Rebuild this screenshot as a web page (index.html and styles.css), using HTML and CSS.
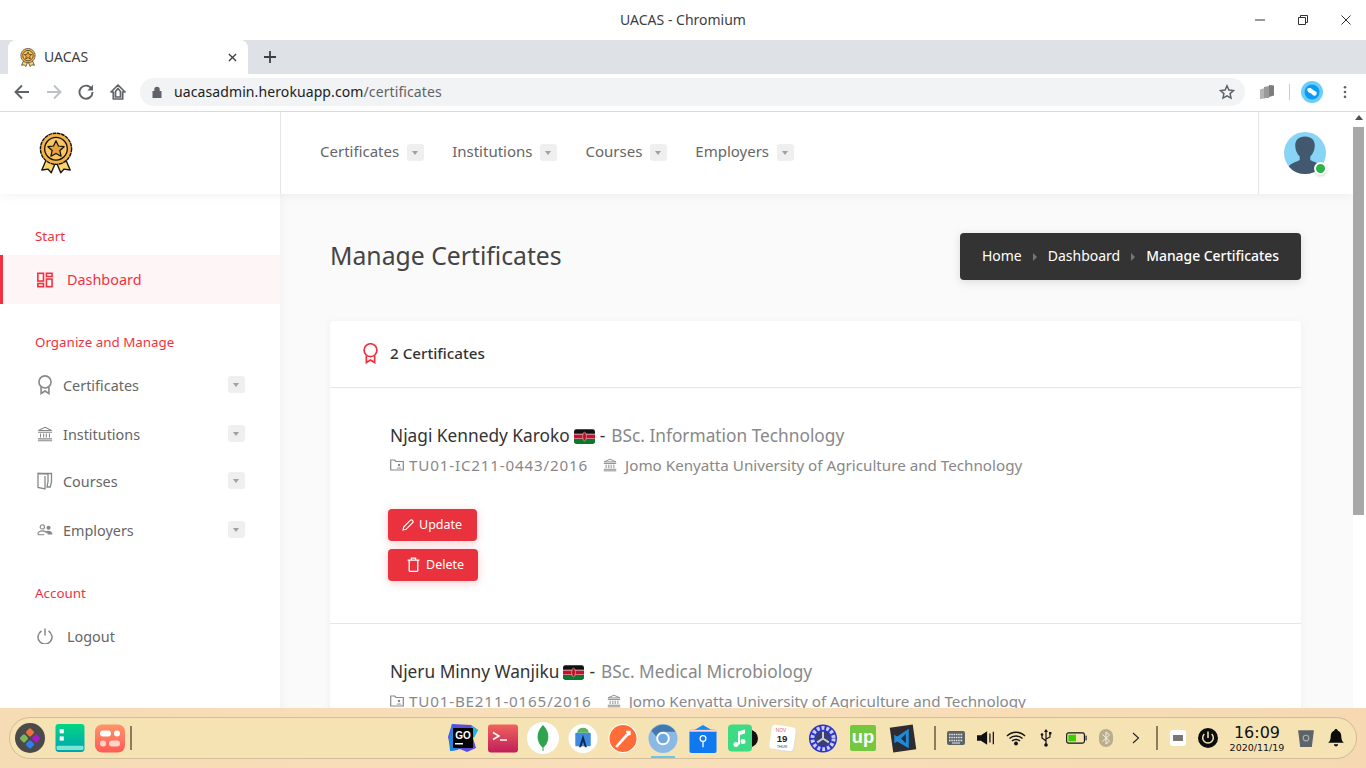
FILE: index.html
```html
<!DOCTYPE html>
<html lang="en">
<head>
<meta charset="utf-8">
<title>UACAS - Chromium</title>
<link rel="stylesheet" href="styles.css">
</head>
<body>
<svg class="sprite" width="0" height="0">
  <defs>
    <symbol id="ribbon" viewBox="0 0 18 22"><g fill="none" stroke="currentColor" stroke-width="1.800"><circle cx="9" cy="7.500" r="6.800"/><path d="M4.600 13V20.600L9 17.800l4.400 2.800V13"/></g></symbol>
    <symbol id="bank" viewBox="0 0 18 18"><g fill="none" stroke="currentColor" stroke-width="1.200"><path d="M9 1.500 16.500 5H1.500Z"/><path d="M1 7h16M1 16.500h16M1 14.500h16M4 8.500v4.500M7.500 8.500v4.500M10.500 8.500v4.500M14 8.500v4.500"/></g></symbol>
    <symbol id="medal" viewBox="0 0 36 44">
      <path d="M9 26 3 40l6.500-1 3.500 4 5-12 5 12 3.500-4 6.500 1-6-14Z" fill="#fbd46d" stroke="#111" stroke-width="1.400" stroke-linejoin="round"/>
      <circle cx="18" cy="17.500" r="16.500" fill="#f4b24a" stroke="#111" stroke-width="1.500" stroke-dasharray="4 .6"/>
      <circle cx="18" cy="17.500" r="12" fill="#f9c65f" stroke="#111" stroke-width="1.400"/>
      <path d="m18 9 2.600 5.600 6 .7-4.500 4.100 1.300 6L18 22.500l-5.400 2.900 1.300-6-4.500-4.100 6-.7Z" fill="#e9a23b" stroke="#111" stroke-width="1.300" stroke-linejoin="round"/>
    </symbol>
    <symbol id="flag" viewBox="0 0 22 15">
      <rect width="22" height="15" rx="2.500" fill="#111"/>
      <path d="M0 5h22v5H0Z" fill="#c8102e"/><path d="M0 4.500h22v.8H0ZM0 9.700h22v.8H0Z" fill="#eee"/>
      <path d="M0 10.500h22V12.500a2.500 2.500 0 0 1-2.500 2.500h-17A2.500 2.500 0 0 1 0 12.500Z" fill="#0a7a2f"/>
      <ellipse cx="11" cy="7.500" rx="2" ry="4.500" fill="#b5121b" stroke="#eee" stroke-width=".5"/>
    </symbol>
  </defs>
</svg>
<div class="screen">
  <header class="titlebar">
    <span class="titlebar-text">UACAS - Chromium</span>
    <div class="winbtns">
      <svg class="winbtn" viewBox="0 0 12 12"><path d="M1 6h10" stroke="#333" fill="none"/></svg>
      <svg class="winbtn" viewBox="0 0 12 12"><path d="M1.500 3.500h7v7h-7ZM3.500 3.500v-2h7v7h-2" stroke="#333" fill="none"/></svg>
      <svg class="winbtn" viewBox="0 0 12 12"><path d="m1.500 1.500 9 9M10.500 1.500l-9 9" stroke="#333" fill="none"/></svg>
    </div>
  </header>
  <div class="tabstrip">
    <div class="tab">
      <svg class="favicon"><use href="#medal"/></svg>
      <span class="tab-title">UACAS</span>
      <svg class="tab-close" viewBox="0 0 10 10"><path d="m1 1 8 8M9 1 1 9" stroke="#3c4043" stroke-width="1.500"/></svg>
    </div>
    <svg class="newtab" viewBox="0 0 12 12"><path d="M6 0v12M0 6h12" stroke="#3c4043" stroke-width="1.800"/></svg>
  </div>
  <div class="toolbar">
    <svg class="tool" viewBox="0 0 16 16"><path d="M15 8H2M8 1.500 1.500 8 8 14.500" fill="none" stroke="#5f6368" stroke-width="1.900"/></svg>
    <svg class="tool" viewBox="0 0 16 16"><path d="M1 8h13M8 1.500 14.500 8 8 14.500" fill="none" stroke="#bdc1c6" stroke-width="1.900"/></svg>
    <svg class="tool" viewBox="0 0 16 16"><path d="M13.500 4.700A6.500 6.500 0 1 0 14.500 8" fill="none" stroke="#5f6368" stroke-width="1.900"/><path d="M15 .8V6.500H9.300Z" fill="#5f6368"/></svg>
    <svg class="tool" viewBox="0 0 16 16"><path d="M8 1 1 8h2.300v7h9.400V8H15ZM5.500 13V7.500L8 4.500l2.500 3V13Z" fill="none" stroke="#5f6368" stroke-width="1.700" stroke-linejoin="round"/></svg>
    <div class="omnibox">
      <svg class="lock" viewBox="0 0 10 12"><path d="M2.300 5V3.500a2.700 2.700 0 0 1 5.400 0V5H9.500v7H.5V5Z" fill="#5f6368"/></svg>
      <span class="url">uacasadmin.herokuapp.com<span class="url-path">/certificates</span></span>
      <svg class="star" viewBox="0 0 16 16"><path d="m8 1.800 1.900 4.200 4.600.5-3.400 3.100.9 4.500L8 11.800l-4 2.300.9-4.500L1.500 6.500l4.600-.5Z" fill="none" stroke="#5f6368" stroke-width="1.500"/></svg>
    </div>
    <div class="ext-group">
      <svg class="ext" viewBox="0 0 16 16"><path d="M1 5.500 6 4v10.500L1 15Z" fill="#b5b5b5"/><path d="M5 3 10 2v12H5Z" fill="#9a9a9a"/><path d="M10 1l5 .5v10l-5 1.500Z" fill="#7d7d7d"/></svg>
      <span class="ext-sep"></span>
      <svg class="ext-blue" viewBox="0 0 22 22"><circle cx="11" cy="11" r="11" fill="#6ccdf8"/><circle cx="11" cy="11" r="7.500" fill="#0a9cf5"/><path d="M6.500 7.500c2-1 4-.5 5 1l4 2.500c.5 1.500 0 3-1 3.500-1.500.5-3 0-3.500-1.500l-3-1.500c-1.500-.8-2-2.500-1.500-4Z" fill="#fff"/></svg>
      <svg class="kebab" viewBox="0 0 4 16"><circle cx="2" cy="2.500" r="1.500" fill="#5f6368"/><circle cx="2" cy="8" r="1.500" fill="#5f6368"/><circle cx="2" cy="13.500" r="1.500" fill="#5f6368"/></svg>
    </div>
  </div>
  <div class="viewport">
    <div class="page">
      <div class="topbar">
        <div class="brand"><svg class="logo"><use href="#medal"/></svg></div>
        <nav class="topnav">
          <a class="topnav-item"><span class="topnav-text">Certificates</span><span class="caret"></span></a>
          <a class="topnav-item"><span class="topnav-text">Institutions</span><span class="caret"></span></a>
          <a class="topnav-item"><span class="topnav-text">Courses</span><span class="caret"></span></a>
          <a class="topnav-item"><span class="topnav-text">Employers</span><span class="caret"></span></a>
        </nav>
        <div class="usercell">
          <div class="avatar">
            <svg class="avatar-img" viewBox="0 0 42 42"><circle cx="21" cy="21" r="21" fill="#87d4f7"/><path d="M21 4.500c6.300 0 9.800 3.800 9.800 9 0 4-1.700 8.500-4.500 11v3.500c3.500 2 8.700 3.200 11 6.500A21 21 0 0 1 21 42 21 21 0 0 1 4.700 34.500c2.300-3.300 7.500-4.500 11-6.500v-3.500c-2.800-2.500-4.500-7-4.500-11 0-5.200 3.500-9 9.800-9Z" fill="#42586e"/></svg>
            <span class="status"></span>
          </div>
        </div>
      </div>
      <div class="body-row">
        <aside class="sidebar">
          <div class="side-label first">Start</div>
          <a class="side-link active">
            <svg class="side-ico dash" viewBox="0 0 17 16"><g fill="none" stroke="currentColor" stroke-width="1.700"><rect x=".9" y=".9" width="6" height="8.200"/><rect x="10" y=".9" width="6" height="3.400"/><rect x="10" y="7" width="6" height="8.100"/><rect x=".9" y="11.700" width="6" height="3.400"/></g></svg>
            Dashboard
          </a>
          <div class="side-label">Organize and Manage</div>
          <a class="side-link sub r1"><svg class="side-ico"><use href="#ribbon"/></svg><span class="grow">Certificates</span><span class="caret"></span></a>
          <a class="side-link sub r2"><svg class="side-ico"><use href="#bank"/></svg><span class="grow">Institutions</span><span class="caret"></span></a>
          <a class="side-link sub r3"><svg class="side-ico" viewBox="0 0 16 18"><path d="M1 1.500h13.500V10l-1.300 5H10l1-5.500V2L1 1.500v14l7 1.500V4" fill="none" stroke="currentColor" stroke-width="1.300"/></svg><span class="grow">Courses</span><span class="caret"></span></a>
          <a class="side-link sub r4"><svg class="side-ico" viewBox="0 0 18 14"><circle cx="6" cy="3.500" r="2.400" fill="none" stroke="currentColor" stroke-width="1.300"/><circle cx="13" cy="4.500" r="2.300" fill="currentColor"/><path d="M1 12c0-2.500 2.500-4 5-4s4.500 1 5 2.500M1 12.300h7" fill="none" stroke="currentColor" stroke-width="1.300"/><path d="M9.500 8.500c3-1.300 7.500-.5 8 3.500H12c0-1.500-1-2.800-2.500-3.500Z" fill="currentColor"/></svg><span class="grow">Employers</span><span class="caret"></span></a>
          <div class="side-label account">Account</div>
          <a class="side-link logout">
            <svg class="side-ico dash" viewBox="0 0 16 16"><path d="M4.500 3a7 7 0 1 0 7 0M8 .5v7" fill="none" stroke="currentColor" stroke-width="1.500"/></svg>
            Logout
          </a>
        </aside>
        <main class="main">
          <div class="page-head">
            <h1 class="page-title">Manage Certificates</h1>
            <div class="crumbs">
              <span>Home</span><span class="crumb-sep"></span><span>Dashboard</span><span class="crumb-sep"></span><span class="crumb-now">Manage Certificates</span>
            </div>
          </div>
          <section class="card">
            <div class="card-head">
              <svg class="card-ico"><use href="#ribbon"/></svg>
              <span>2 Certificates</span>
            </div>
            <article class="cert">
              <h3 class="cert-title"><span class="cert-name">Njagi Kennedy Karoko</span><svg class="flag"><use href="#flag"/></svg><span class="cert-name">-</span><span class="cert-course">BSc. Information Technology</span></h3>
              <div class="cert-meta">
                <svg class="meta-ico" viewBox="0 0 14 12"><path d="M.7 1h4l1.300 1.500h7.300V11H.7Z" fill="none" stroke="currentColor" stroke-width="1.200"/><circle cx="9" cy="6" r="1.200" fill="currentColor"/><path d="M6.500 9.500c0-1.500 5-1.500 5 0Z" fill="currentColor"/></svg>
                <span class="cert-code">TU01-IC211-0443/2016</span>
                <svg class="meta-ico bank-gap"><use href="#bank"/></svg>
                <span class="inst">Jomo Kenyatta University of Agriculture and Technology</span>
              </div>
              <div class="actions">
                <a class="btn btn-up"><svg class="btn-ico" viewBox="0 0 12 12"><path d="M1 11l.7-3L8.500 1.200a1.200 1.200 0 0 1 1.700 0l.6.600a1.200 1.200 0 0 1 0 1.700L4 10.300Z" fill="none" stroke="#fff" stroke-width="1.100"/></svg>Update</a>
                <a class="btn btn-del"><svg class="btn-ico trash" viewBox="0 0 12 14"><path d="M.5 3h11M2 3v9.500a1 1 0 0 0 1 1h6a1 1 0 0 0 1-1V3M4 3V1h4v2" fill="none" stroke="#fff" stroke-width="1.200"/></svg>Delete</a>
              </div>
            </article>
            <article class="cert">
              <h3 class="cert-title"><span class="cert-name">Njeru Minny Wanjiku</span><svg class="flag"><use href="#flag"/></svg><span class="cert-name">-</span><span class="cert-course">BSc. Medical Microbiology</span></h3>
              <div class="cert-meta">
                <svg class="meta-ico" viewBox="0 0 14 12"><path d="M.7 1h4l1.300 1.500h7.300V11H.7Z" fill="none" stroke="currentColor" stroke-width="1.200"/><circle cx="9" cy="6" r="1.200" fill="currentColor"/><path d="M6.500 9.500c0-1.500 5-1.500 5 0Z" fill="currentColor"/></svg>
                <span class="cert-code">TU01-BE211-0165/2016</span>
                <svg class="meta-ico bank-gap"><use href="#bank"/></svg>
                <span class="inst">Jomo Kenyatta University of Agriculture and Technology</span>
              </div>
            </article>
          </section>
        </main>
      </div>
    </div>
    <div class="scrollbar">
      <span class="sb-up"></span>
      <span class="sb-thumb"></span>
      <span class="sb-down"></span>
    </div>
  </div>
  <footer class="dockwrap">
    <div class="dock">
      <div class="dock-left">
        <span class="slot"><svg class="d36" viewBox="0 0 30 30"><circle cx="15" cy="15" r="15" fill="#4a4a4a"/><rect x="12" y="6" width="6.500" height="6.500" rx="1.500" transform="rotate(45 15 9)" fill="#f0703a"/><rect x="6" y="12" width="6.500" height="6.500" rx="1.500" transform="rotate(45 9 15)" fill="#7ab85a"/><rect x="18" y="12" width="6.500" height="6.500" rx="1.500" transform="rotate(45 21 15)" fill="#a81dc8"/><rect x="12" y="18" width="6.500" height="6.500" rx="1.500" transform="rotate(45 15 21)" fill="#2f7ff0"/></svg></span>
        <span class="slot"><svg class="d30" viewBox="0 0 28 28"><defs><linearGradient id="g1" x1="0" y1="0" x2="0" y2="1"><stop offset="0" stop-color="#00d681"/><stop offset="1" stop-color="#00a3b5"/></linearGradient></defs><rect width="28" height="27" rx="3" fill="url(#g1)"/><rect x="1" y="21" width="26" height="4" rx="1" fill="#7fe5d3"/><rect x="4" y="5" width="4" height="4" fill="#fff"/><rect x="4" y="12" width="4" height="4" fill="#fff"/></svg></span>
        <span class="slot"><svg class="d30" viewBox="0 0 30 28"><defs><linearGradient id="g2" x1="0" y1="0" x2="0" y2="1"><stop offset="0" stop-color="#ff9568"/><stop offset="1" stop-color="#ff5b58"/></linearGradient></defs><rect width="30" height="28" rx="7" fill="url(#g2)"/><rect x="5" y="6" width="11" height="6" rx="3" fill="#fff"/><circle cx="22" cy="9" r="3" fill="#fff"/><circle cx="8" cy="19" r="3" fill="#ffd6c8"/><rect x="14" y="16" width="11" height="6" rx="3" fill="#ffd6c8"/></svg></span>
        <span class="dock-sep"></span>
      </div>
      <div class="dock-center">
        <span class="slot"><svg class="d32" viewBox="0 0 32 32"><path d="M5 2 24 3l7 5-5 8 3 10-9 4-7-3-9 2-3-14Z" fill="#5b4ce0"/><path d="M24 3l7 5-4 8Z" fill="#17b8e8"/><path d="M2 17 5 2l6 26-8 1Z" fill="#2384e0"/><rect x="6" y="6" width="20" height="20" fill="#000"/><text x="16" y="17" class="go">GO</text><rect x="8" y="21" width="8" height="1.500" fill="#fff"/></svg></span>
        <span class="slot"><svg class="d30" viewBox="0 0 30 28"><defs><linearGradient id="g3" x1="0" y1="0" x2="0" y2="1"><stop offset="0" stop-color="#f0635a"/><stop offset="1" stop-color="#c01f5a"/></linearGradient></defs><rect width="30" height="28" rx="3" fill="url(#g3)"/><path d="M5 8l6 3.500L5 15" stroke="#fff" stroke-width="1.500" fill="none"/><path d="M12 15.500h7" stroke="#fff" stroke-width="1.500"/></svg></span>
        <span class="slot"><svg class="d32" viewBox="0 0 32 32"><circle cx="16" cy="16" r="16" fill="#fff"/><path d="M16 3c5 5 6 10 5 15-1 4-3 6-4.500 7.500V29h-1v-3.500C14 24 12 22 11 18c-1-5 0-10 5-15Z" fill="#2ea44f"/></svg></span>
        <span class="slot"><svg class="d30" viewBox="0 0 30 30"><circle cx="15" cy="15" r="15" fill="#fff"/><rect x="7" y="9" width="16" height="14" rx="1" fill="#3f8ae0"/><path d="M9 9a6 5 0 0 1 12 0Z" fill="#60b060"/><path d="M15 11l-4 13h2l2-6 2 6h2Z" fill="#102a50"/></svg></span>
        <span class="slot"><svg class="d30" viewBox="0 0 30 30"><circle cx="15" cy="15" r="15" fill="#fff"/><circle cx="15" cy="15" r="14" fill="#ff6c37"/><path d="M7 23 18 10l2.500 2L9 24.500Z M18 7h5v4.500l-3.500 1Z" fill="#fff"/></svg></span>
        <span class="slot"><svg class="d30" viewBox="0 0 30 30"><circle cx="15" cy="15" r="15" fill="#8ab9e6"/><path d="M3 7A15 15 0 0 1 28 8H15a7 7 0 0 0-7 5Z" fill="#4278ad"/><circle cx="15" cy="15" r="7" fill="#fff"/><circle cx="15" cy="15" r="5" fill="#70a7de"/></svg><span class="running"></span></span>
        <span class="slot"><svg class="d30" viewBox="0 0 28 30"><path d="M2 8 14 1l12 7Z" fill="#158cf0"/><rect y="6" width="28" height="24" rx="2" fill="#0f7af0"/><rect y="6" width="28" height="2" fill="#ffd0d0"/><circle cx="14" cy="15" r="3" fill="none" stroke="#fff" stroke-width="1.300"/><path d="M14 18v6" stroke="#fff" stroke-width="1.300"/></svg></span>
        <span class="slot"><svg class="d30" viewBox="0 0 30 28"><circle cx="21" cy="14" r="9" fill="#111"/><rect width="24" height="27" rx="4" fill="#3ddc84"/><path d="M10 20V7l7-2v4l-5 1.500V20" fill="#fff"/><circle cx="8" cy="20" r="2.500" fill="#fff"/><circle cx="15" cy="17" r="2.500" fill="#fff"/></svg></span>
        <span class="slot"><svg class="d30" viewBox="0 0 30 30"><rect x="3" y="3" width="25" height="25" rx="4" fill="#dcdcdc" transform="rotate(8 15 15)"/><rect x="2" y="2" width="25" height="25" rx="4" fill="#fff" transform="rotate(8 15 15)"/><text x="13" y="8" class="cal-a">NOV</text><text x="14" y="19" class="cal-b">19</text><text x="14" y="25" class="cal-c">THUR</text></svg></span>
        <span class="slot"><svg class="d30" viewBox="0 0 30 30"><circle cx="15" cy="15" r="14.500" fill="#2f34c8"/><circle cx="15" cy="15" r="11" fill="none" stroke="#c8d0f0" stroke-width="4" stroke-dasharray="3 2"/><circle cx="15" cy="15" r="7.500" fill="#3a3f70"/><path d="M15 15V8M15 15l6 4M15 15l-6 4" stroke="#d0d0d8" stroke-width="2"/></svg></span>
        <span class="slot"><svg class="d28" viewBox="0 0 28 28"><rect width="27" height="27" rx="2" fill="#74c83f"/><text x="13.500" y="19" class="up">up</text></svg></span>
        <span class="slot"><svg class="d30" viewBox="0 0 30 30"><rect x="3" y="2" width="24" height="26" fill="#2c2c32" transform="rotate(-8 15 15)"/><path d="M21 5v20l-12-7-3 2V11l3 2Zm-3 5-5 5 5 5Z" fill="#1f8ad8"/></svg></span>
      </div>
      <div class="dock-right">
        <span class="dock-sep"></span>
        <span class="tray"><svg class="t18" viewBox="0 0 18 14"><rect width="18" height="14" rx="2" fill="#5d6468"/><path d="M2 3.500h14M2 6.500h14M2 9.500h14" stroke="#e8e8e8" stroke-width="1.300" stroke-dasharray="1.500 .8"/><path d="M5 12h8" stroke="#e8e8e8"/></svg></span>
        <span class="tray"><svg class="t18" viewBox="0 0 16 14"><path d="M0 4.500h3.500L9 1v12L3.500 9.500H0Z" fill="#111"/><path d="M11.500 3v8M14.500 1.500v11" stroke="#111" stroke-width="1.100"/></svg></span>
        <span class="tray"><svg class="t20" viewBox="0 0 20 15"><g fill="none" stroke="#111" stroke-width="1.400"><path d="M1 5.500c5-5 13-5 18 0M3.500 8c3.500-3.300 9.500-3.300 13 0M6 10.500c2-2 6-2 8 0"/></g><circle cx="10" cy="13" r="1.900" fill="#111"/></svg></span>
        <span class="tray"><svg class="t18" viewBox="0 0 12 18"><path d="M6 1v15M2 6v3l4 3M10 4.500V8L6 10" fill="none" stroke="#111" stroke-width="1.200"/><path d="m6 0 2 3H4Z" fill="#111"/><circle cx="6" cy="16" r="1.800" fill="#111"/><circle cx="2" cy="5.500" r="1.300" fill="#111"/><rect x="9" y="3" width="2.400" height="2.400" fill="#111"/></svg></span>
        <span class="tray"><svg class="t22" viewBox="0 0 22 12"><rect x=".7" y=".7" width="18.600" height="10.600" rx="2" fill="none" stroke="#111" stroke-width="1.200"/><rect x="2.500" y="2.500" width="8" height="7" fill="#38d000"/><rect x="20.300" y="3.500" width="1.500" height="5" fill="#444"/></svg></span>
        <span class="tray"><svg class="t18" viewBox="0 0 14 18"><rect width="14" height="18" rx="7" fill="#b9ad8e"/><path d="M3.500 5.500l7 6.500L7 15V3l3.500 3-7 6.500" fill="none" stroke="#f5f0e0" stroke-width="1"/></svg></span>
        <span class="tray"><svg class="t12" viewBox="0 0 8 12"><path d="m1 1 5.500 5L1 11" fill="none" stroke="#222" stroke-width="1.100"/></svg></span>
        <span class="dock-sep sep2"></span>
        <span class="tray"><svg class="t16" viewBox="0 0 16 16"><rect width="16" height="16" rx="3" fill="#fff"/><rect x="3" y="5" width="10" height="6" fill="#777"/></svg></span>
        <span class="tray"><svg class="t20" viewBox="0 0 20 20"><circle cx="10" cy="10" r="10" fill="#0c0c0c"/><path d="M6.300 6a5.300 5.300 0 1 0 7.400 0M10 3.500v6.500" fill="none" stroke="#f5e3b5" stroke-width="1.500"/></svg></span>
        <span class="clock"><span class="clock-time">16:09</span><span class="clock-date">2020/11/19</span></span>
        <span class="tray"><svg class="t18" viewBox="0 0 16 16"><path d="M1 1h14l-1.800 15H2.800Z" fill="#5d6468"/><circle cx="8" cy="8" r="2.500" fill="none" stroke="#a9b0b3"/></svg></span>
        <span class="tray"><svg class="t18" viewBox="0 0 16 17"><path d="M8 0c1 0 1.500.6 1.500 1.400C12 2.200 13 4.500 13 7c0 3 .8 4.500 2.500 6H.5C2.200 11.500 3 10 3 7c0-2.500 1-4.800 3.500-5.600C6.500.6 7 0 8 0Z" fill="#0c0c0c"/><path d="M6 14.500h4a2 2 0 0 1-4 0Z" fill="#0c0c0c"/></svg></span>
      </div>
    </div>
  </footer>
</div>
</body>
</html>
```
FILE: styles.css
```css
* { box-sizing: border-box; }
html, body { margin: 0; padding: 0; height: 100%; }
body { overflow: hidden; background: #fff; font-family: "Noto Sans", "Open Sans", sans-serif; }
.sprite { display: block; height: 0; }
a { color: inherit; text-decoration: none; }

.screen { width: 1366px; height: 768px; display: flex; flex-direction: column; overflow: hidden; }

/* window chrome */
.titlebar { height: 40px; flex: none; display: flex; align-items: center; justify-content: center; position: relative; background: #fff; }
.titlebar-text { font: 14px "Noto Sans", sans-serif; color: #3c4043; padding-bottom: 2px; }
.winbtns { position: absolute; right: 0; top: 0; height: 40px; display: flex; align-items: center; gap: 31px; padding-right: 14px; }
.winbtn { width: 12px; height: 12px; }
.tabstrip { height: 34px; flex: none; background: #dee1e6; display: flex; align-items: stretch; padding-left: 8px; }
.tab { width: 240px; background: #fff; border-radius: 8px 8px 0 0; display: flex; align-items: center; padding: 0 11px 0 12px; }
.favicon { width: 16px; height: 19px; flex: none; }
.tab-title { font: 14px "Noto Sans", sans-serif; color: #3c4043; margin-left: 8px; padding-bottom: 2px; flex: 1; }
.tab-close { width: 9px; height: 9px; }
.newtab { width: 12px; height: 12px; align-self: center; margin-left: 16px; }
.toolbar { height: 38px; flex: none; background: #fff; border-bottom: 1px solid #d8dadd; display: flex; align-items: center; padding: 0 0 1px 14px; }
.tool { width: 16px; height: 16px; margin-right: 16px; flex: none; }
.omnibox { width: 1105px; margin-left: -2px; height: 28px; border-radius: 14px; background: #f1f3f4; display: flex; align-items: center; padding: 0 10px 0 12px; }
.lock { width: 10px; height: 12px; flex: none; }
.url { font: 14px "Noto Sans", sans-serif; letter-spacing: .1px; color: #202124; margin-left: 12px; padding-bottom: 2px; flex: 1; }
.url-path { color: #5f6368; }
.star { width: 16px; height: 16px; }
.ext-group { display: flex; align-items: center; margin-left: 14px; }
.ext { width: 16px; height: 16px; }
.ext-sep { width: 1px; height: 16px; background: #ccc; margin: 0 11px 0 14px; }
.ext-blue { width: 22px; height: 22px; }
.kebab { width: 4px; height: 14px; margin-left: 20px; }

/* viewport */
.viewport { flex: 1; min-height: 0; display: flex; position: relative; height: 596px; }
.page { width: 1353px; display: flex; flex-direction: column; overflow: hidden; background: #fafafa; }
.scrollbar { width: 13px; background: #fff; display: flex; flex-direction: column; align-items: stretch; padding-right: 2px; }
.sb-up { height: 15px; position: relative; }
.sb-up::after, .sb-down::after { content: ""; position: absolute; left: 2px; border: 4px solid transparent; }
.sb-up::after { top: 3px; border-top: 0; border-bottom: 5px solid #505050; }
.sb-thumb { height: 388px; background: #a8a8a8; }
.sb-down { margin-top: auto; height: 15px; position: relative; }
.sb-down::after { bottom: 3px; border-bottom: 0; border-top: 5px solid #505050; }

.topbar { height: 82px; flex: none; background: #fff; display: flex; align-items: stretch; box-shadow: 0 0 12px rgba(0,0,0,.07); position: relative; z-index: 2; }
.brand { width: 281px; border-right: 1px solid #e4e4e4; padding: 20px 0 0 39px; }
.logo { width: 34px; height: 42px; display: block; }
.topnav { flex: 1; display: flex; align-items: center; padding-left: 39px; gap: 28px; }
.topnav-item { font-size: 15px; color: #666; display: flex; align-items: center; gap: 8px; }
.topnav-text { padding-bottom: 4px; }
.caret { width: 17px; height: 17px; border-radius: 3px; background: #efefef; flex: none; position: relative; display: block; }
.caret::after { content: ""; position: absolute; left: 5px; top: 7px; border: 3.500px solid transparent; border-bottom: 0; border-top: 4px solid #a0a0a0; }
.topnav .caret { margin-top: -2px; }
.usercell { width: 95px; border-left: 1px solid #e4e4e4; padding: 20px 0 0 25px; }
.avatar { width: 42px; height: 42px; position: relative; }
.avatar-img { width: 42px; height: 42px; display: block; }
.status { position: absolute; right: -1px; bottom: -1px; width: 13px; height: 13px; border-radius: 50%; background: #2db34a; border: 2px solid #fff; box-shadow: 0 1px 3px rgba(0,0,0,.2); }

.body-row { flex: 1; display: flex; min-height: 0; }
.sidebar { width: 280px; flex: none; background: #fff; box-shadow: 0 0 12px rgba(0,0,0,.05); padding-top: 33px; color: #666; }
.side-label { font-size: 13.400px; line-height: 18px; color: #f3303f; padding-left: 35px; margin: 29px 0 0; }
.side-label.first { margin-top: 0; }
.side-label.account { margin-top: 30px; }
.side-link { display: flex; align-items: center; font-size: 14.400px; height: 49px; padding-left: 37px; color: #666; }
.side-link.active { margin-top: 10px; background: #fdf5f6; color: #f3303f; border-left: 3px solid #f3303f; padding-left: 34px; }
.side-ico { width: 16px; height: 20px; color: #888; margin-right: 10px; flex: none; }
.side-ico.dash { height: 16px; width: 16px; margin-right: 14px; color: inherit; }
.side-link .side-ico.dash { color: inherit; }
.logout .side-ico.dash { color: #888; }
.grow { flex: 1; padding-top: 1px; }
.side-link .caret { margin-right: 35px; }
.side-link.r1 { margin-top: 9px; }
.side-link.r3 { margin-top: -2px; }
.side-link.logout { margin-top: 11px; height: 46px; }

.main { flex: 1; min-width: 0; padding: 39px 52px 0 50px; }
.page-head { display: flex; align-items: center; justify-content: space-between; margin-bottom: 41px; }
.page-title { margin: 0; font-size: 24.750px; font-weight: 400; color: #444; line-height: 45px; padding-bottom: 2px; }
.crumbs { height: 47px; background: #333; border-radius: 4px; display: flex; align-items: center; padding: 0 22px 2px; font-size: 14px; color: #fff; box-shadow: 0 2px 10px rgba(0,0,0,.13); }
.crumb-now { font-weight: 500; font-size: 13.900px; }
.crumb-sep { width: 0; height: 0; margin: 2px 11px 0; border: 4px solid transparent; border-right: 0; border-left: 4px solid #777; }
.card { background: #fff; border-radius: 4px; box-shadow: 0 1px 8px rgba(0,0,0,.05); }
.card-head { height: 67px; display: flex; align-items: center; padding: 0 0 2px 32px; font-size: 15.200px; font-weight: 500; color: #333; border-bottom: 1px solid #e6e6e6; }
.card-ico { width: 17px; height: 21px; color: #f3303f; margin-right: 11px; }
.cert { padding: 35px 60px 42px; border-bottom: 1px solid #e6e6e6; }
.cert-title { margin: 0; font-size: 17.300px; font-weight: 400; line-height: 26px; display: flex; align-items: center; color: #333; }
.cert-course { color: #888; margin-left: 6px; }
.flag { width: 21px; height: 15px; margin: 0 5px 0 4px; flex: none; }
.cert-meta { display: flex; align-items: center; font-size: 15.200px; line-height: 24px; color: #888; margin-top: 4px; }
.cert-code { letter-spacing: .82px; }
.meta-ico { width: 14px; height: 14px; margin-right: 5px; color: #888; flex: none; }
.bank-gap { margin-left: 15px; margin-right: 8px; }
.actions { margin: 32px 0 0 -2px; display: flex; flex-direction: column; gap: 8px; align-items: flex-start; }
.btn { height: 32px; border-radius: 4px; background: #e9323d; color: #fff; font-size: 12.500px; padding-bottom: 1px; display: flex; align-items: center; box-shadow: 0 2px 8px rgba(233,50,61,.25); }
.btn-up { width: 89px; padding-left: 14px; }
.btn-del { width: 90px; padding-left: 19px; }
.btn-ico { width: 12px; height: 12px; margin-right: 5px; }
.btn-ico.trash { width: 13px; height: 15px; margin-right: 6px; }

/* dock */
.dockwrap { position: absolute; left: 0; bottom: 0; width: 1366px; height: 60px; padding: 10px 10px 10px; background: linear-gradient(100deg, #f5dcb5, #f8dfba 50%, #f6d9b2); }
.dock { height: 40px; background: #f6e3b4; border-radius: 20px; box-shadow: 0 0 0 1px rgba(150,130,100,.35); display: grid; grid-template-columns: 1fr auto 1fr; align-items: center; }
.dock-left, .dock-center, .dock-right { display: flex; align-items: center; }
.dock-right { justify-content: flex-end; padding-right: 5px; }
.slot { width: 40px; height: 40px; display: flex; align-items: center; justify-content: center; flex: none; position: relative; }
.dock-sep { width: 2px; height: 24px; background: #8c7d5f; flex: none; }
.dock-right > .dock-sep:first-child { margin-right: 5px; }
.sep2 { margin: 0 5px; }
.tray { width: 30px; height: 30px; display: flex; align-items: center; justify-content: center; flex: none; }
.d36 { width: 30px; height: 30px; }
.d32 { width: 32px; height: 32px; }
.d30 { width: 30px; height: 29px; }
.d28 { width: 27px; height: 27px; }
.t22 { width: 21px; height: 12px; }
.t20 { width: 20px; height: 20px; }
.t18 { width: 18px; height: 18px; }
.t16 { width: 16px; height: 16px; }
.t12 { width: 8px; height: 12px; }
.running { position: absolute; left: 8px; right: 8px; bottom: 0; height: 2px; background: #6cc6e8; }
.clock { width: 68px; display: flex; flex-direction: column; align-items: center; color: #111; font-family: "DejaVu Sans", sans-serif; }
.clock-time { font-size: 16px; line-height: 18px; }
.clock-date { font-size: 9.500px; line-height: 11px; }
.go { font: 700 10px "Liberation Sans", sans-serif; fill: #fff; text-anchor: middle; }
.up { font: 700 19px "Liberation Sans", sans-serif; fill: #fff; text-anchor: middle; }
.cal-a { font: 5px "Liberation Sans", sans-serif; fill: #e06060; text-anchor: middle; }
.cal-b { font: 700 10px "Liberation Sans", sans-serif; fill: #222; text-anchor: middle; }
.cal-c { font: 4px "Liberation Sans", sans-serif; fill: #444; text-anchor: middle; }
```
